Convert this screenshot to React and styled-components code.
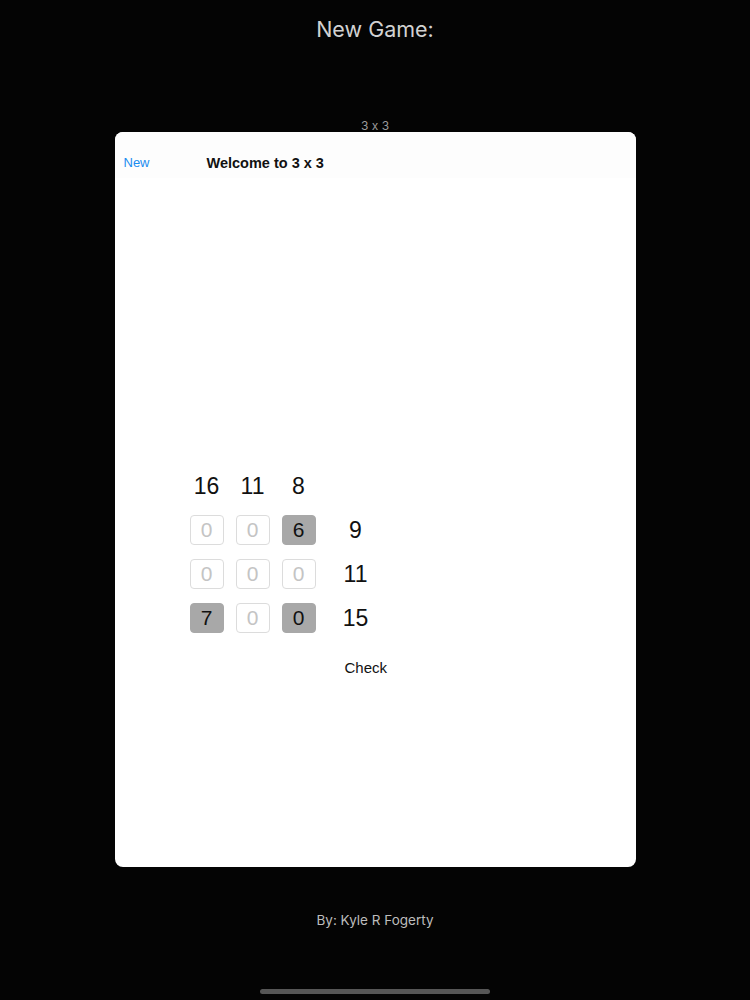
import React from "react";
import styled, { createGlobalStyle } from "styled-components";

const GlobalStyle = createGlobalStyle`
  html, body {
    margin: 0;
    padding: 0;
    background: #040404;
  }
  * {
    box-sizing: border-box;
  }
`;

const Page = styled.div`
  width: 750px;
  height: 1000px;
  background: #040404;
  display: flex;
  flex-direction: column;
  align-items: center;
  font-family: Inter, "Liberation Sans", sans-serif;
  font-feature-settings: "calt" 0;
  overflow: hidden;
`;

const Title = styled.h1`
  margin: 15px 0 0;
  font-size: 21.5px;
  line-height: 28px;
  font-weight: 400;
  color: #d2d2d2;
`;

const ModeLabel = styled.div`
  margin-top: 76px;
  font-size: 12px;
  line-height: 14px;
  color: #9a9a9a;
`;

const Sheet = styled.div`
  margin-top: -1px;
  width: 521px;
  height: 735px;
  background: #fff;
  border-radius: 8px;
  display: flex;
  flex-direction: column;
  font-family: "Liberation Sans", Arial, sans-serif;
`;

const NavBar = styled.div`
  height: 46px;
  display: flex;
  align-items: flex-start;
  padding: 23px 0 0 9px;
  background: #fdfdfd;
  border-radius: 8px 8px 0 0;
`;

const NavButton = styled.button`
  border: none;
  background: none;
  padding: 0;
  font-family: inherit;
  font-size: 13px;
  line-height: 16px;
  color: #1a8cf0;
  width: 83px;
  text-align: left;
`;

const NavTitle = styled.div`
  font-size: 14.5px;
  line-height: 16px;
  font-weight: 700;
  color: #111;
`;

const Body = styled.div`
  padding: 293px 0 0 75px;
  display: flex;
  flex-direction: column;
`;

const Grid = styled.div`
  display: grid;
  grid-template-columns: 34px 34px 34px 56px;
  grid-auto-rows: 30px;
  column-gap: 12px;
  row-gap: 14px;
`;

const Sum = styled.div`
  display: flex;
  align-items: center;
  justify-content: center;
  font-size: 23px;
  color: #111;
`;

const Cell = styled.div`
  display: flex;
  align-items: center;
  justify-content: center;
  font-size: 21px;
  border-radius: 4px;
  border: 1px solid ${(p) => (p.$filled ? "#a8a8a8" : "#dcdcdc")};
  background: ${(p) => (p.$filled ? "#a8a8a8" : "#fff")};
  color: ${(p) => (p.$filled ? "#111" : "#c4c4c4")};
`;

const CheckButton = styled.button`
  margin: 25px 0 0 155px;
  align-self: flex-start;
  border: none;
  background: none;
  padding: 0;
  font-family: inherit;
  font-size: 15px;
  line-height: 20px;
  color: #111;
`;

const Credit = styled.div`
  margin-top: 44px;
  font-size: 13.5px;
  line-height: 18px;
  color: #bdbdbd;
`;

const HomeIndicator = styled.div`
  margin-top: 60px;
  width: 230px;
  height: 5px;
  border-radius: 3px;
  background: #565656;
`;

const columnSums = [16, 11, 8];
const rows = [
  { cells: [0, 0, 6], filled: [false, false, true], sum: 9 },
  { cells: [0, 0, 0], filled: [false, false, false], sum: 11 },
  { cells: [7, 0, 0], filled: [true, false, true], sum: 15 },
];

export default function App() {
  return (
    <>
      <GlobalStyle />
      <Page>
        <Title>New Game:</Title>
        <ModeLabel>3 x 3</ModeLabel>
        <Sheet>
          <NavBar>
            <NavButton>New</NavButton>
            <NavTitle>Welcome to 3 x 3</NavTitle>
          </NavBar>
          <Body>
            <Grid>
              {columnSums.map((n, i) => (
                <Sum key={"c" + i}>{n}</Sum>
              ))}
              <div />
              {rows.map((row, r) => (
                <React.Fragment key={r}>
                  {row.cells.map((v, c) => (
                    <Cell key={c} $filled={row.filled[c]}>
                      {v}
                    </Cell>
                  ))}
                  <Sum>{row.sum}</Sum>
                </React.Fragment>
              ))}
            </Grid>
            <CheckButton>Check</CheckButton>
          </Body>
        </Sheet>
        <Credit>By: Kyle R Fogerty</Credit>
        <HomeIndicator />
      </Page>
    </>
  );
}
